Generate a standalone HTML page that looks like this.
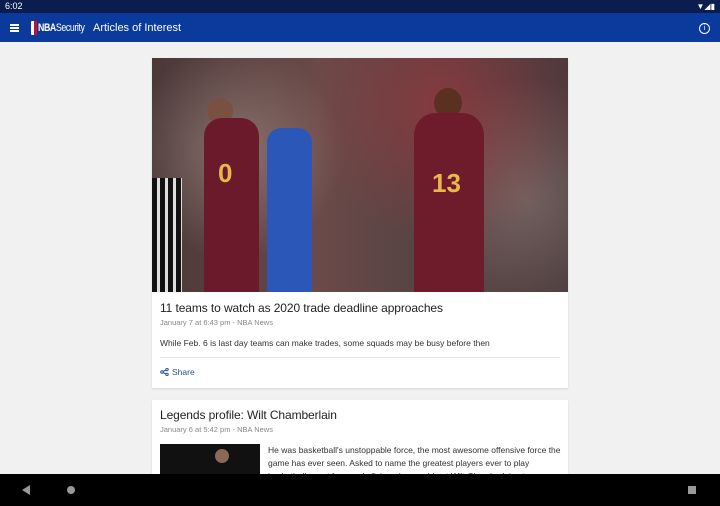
<!DOCTYPE html>
<html><head><meta charset="utf-8"><style>
*{margin:0;padding:0;box-sizing:border-box}
body{width:720px;height:506px;overflow:hidden;background:#f1f1f1;font-family:"Liberation Sans",sans-serif;position:relative}
.sb{position:absolute;top:0;left:0;width:720px;height:13px;background:#0b1c4f;color:#fff;font-size:9px;line-height:13px;padding-left:5px}
.ab{position:absolute;top:13px;left:0;width:720px;height:29px;background:#0a3a9c;color:#fff}
.card{position:absolute;left:152px;width:416px;background:#fff;box-shadow:0 1px 2px rgba(0,0,0,.12)}
.t{font-size:12px;color:#222;position:absolute;left:8px;letter-spacing:-.1px}
.m{font-size:7.5px;color:#888;position:absolute;left:8px}
.d{font-size:8.5px;color:#333;position:absolute;left:8px}
.nav{position:absolute;top:474px;left:0;width:720px;height:32px;background:#000}
</style></head><body>
<div class="sb">6:02<span style="position:absolute;right:5px;top:0;font-size:8px">▼◢▮</span></div>
<div class="ab">
<div style="position:absolute;left:10px;top:11px;width:9px;height:1.5px;background:#fff;box-shadow:0 3px 0 #fff,0 6px 0 #fff"></div>
<div style="position:absolute;left:31px;top:8px;width:6px;height:14px;background:#fff;border-radius:1px"><div style="width:3px;height:14px;background:#c8102e;margin-left:3px"></div></div>
<div style="position:absolute;left:38px;top:9px;font-size:11px;letter-spacing:-.5px;font-weight:bold;transform:scaleX(.8);transform-origin:left">NBA<span style="font-weight:normal">Security</span></div>
<div style="position:absolute;left:93px;top:9px;font-size:11px">Articles of Interest</div>
<div style="position:absolute;left:699px;top:10px;width:11px;height:11px;border:1px solid #fff;border-radius:50%;font-size:7px;text-align:center;line-height:9px">i</div>
</div>
<div class="card" style="top:58px;height:330px">
<div style="height:234px;background:linear-gradient(90deg,#4a3838,#6a4a48 40%,#5a4444 60%,#4a3a3c);position:relative;overflow:hidden">
<div style="position:absolute;left:0;top:0;width:416px;height:234px;background:radial-gradient(circle at 70% 20%,rgba(180,50,60,.5),transparent 40%),radial-gradient(circle at 20% 40%,rgba(220,200,190,.35),transparent 30%),radial-gradient(circle at 90% 60%,rgba(200,180,170,.3),transparent 30%)"></div>
<div style="position:absolute;left:55px;top:40px;width:26px;height:26px;border-radius:50%;background:#7a5040"></div>
<div style="position:absolute;left:52px;top:60px;width:55px;height:175px;background:#6b1a2c;border-radius:18px 18px 0 0"></div>
<div style="position:absolute;left:66px;top:100px;font-size:26px;color:#e8b84a;font-weight:bold">0</div>
<div style="position:absolute;left:115px;top:70px;width:45px;height:165px;background:#2b58b8;border-radius:14px 14px 0 0"></div>
<div style="position:absolute;left:282px;top:30px;width:28px;height:30px;border-radius:50%;background:#5a3020"></div>
<div style="position:absolute;left:262px;top:55px;width:70px;height:180px;background:#6e1b2c;border-radius:22px 22px 0 0"></div>
<div style="position:absolute;left:280px;top:110px;font-size:26px;color:#e8b84a;font-weight:bold">13</div>
<div style="position:absolute;left:0;top:120px;width:30px;height:114px;background:repeating-linear-gradient(90deg,#111 0 5px,#ddd 5px 8px)"></div>
</div>
<div class="t" style="top:243px">11 teams to watch as 2020 trade deadline approaches</div>
<div class="m" style="top:260px">January 7 at 6:43 pm - NBA News</div>
<div class="d" style="top:280px">While Feb. 6 is last day teams can make trades, some squads may be busy before then</div>
<div style="position:absolute;left:8px;right:8px;top:299px;border-top:1px solid #e6e6e6"></div>
<svg style="position:absolute;left:8px;top:310px" width="9" height="8" viewBox="0 0 9 8"><g fill="none" stroke="#2a4f99" stroke-width="1"><circle cx="2" cy="4" r="1.3"/><circle cx="7" cy="1.5" r="1.2"/><circle cx="7" cy="6.5" r="1.2"/><path d="M3 3.5L6 2M3 4.5L6 6"/></g></svg>
<div style="position:absolute;left:20px;top:309px;font-size:8.5px;color:#2a4f99">Share</div>
</div>
<div class="card" style="top:400px;height:90px">
<div class="t" style="top:8px">Legends profile: Wilt Chamberlain</div>
<div class="m" style="top:25px">January 6 at 5:42 pm - NBA News</div>
<div style="position:absolute;left:8px;top:44px;width:100px;height:40px;background:#111"><div style="position:absolute;left:55px;top:5px;width:14px;height:14px;border-radius:50%;background:#8a6a55"></div></div>
<div style="position:absolute;left:116px;top:44px;width:293px;font-size:8.5px;line-height:13px;color:#333">He was basketball's unstoppable force, the most awesome offensive force the game has ever seen. Asked to name the greatest players ever to play basketball, most fans and aficionados would put Wilt Chamberlain at or</div>
</div>
<div class="nav">
<div style="position:absolute;left:22px;top:11px;width:0;height:0;border-top:5px solid transparent;border-bottom:5px solid transparent;border-right:8px solid #999"></div>
<div style="position:absolute;left:67px;top:12px;width:8px;height:8px;border-radius:50%;background:#999"></div>
<div style="position:absolute;left:688px;top:12px;width:8px;height:8px;background:#999"></div>
</div>
</body></html>
